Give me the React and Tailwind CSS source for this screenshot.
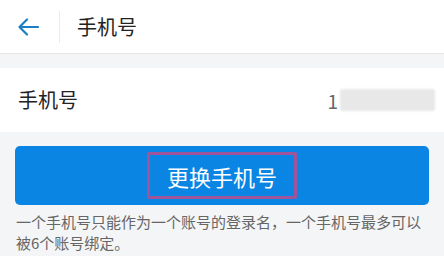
import React from "react";

export default function App() {
  return (
    <div
      className="w-[444px] h-[256px] overflow-hidden bg-[#f4f5f7]"
      style={{ fontFamily: '"Noto Sans CJK SC", "Noto Sans", sans-serif' }}
    >
      {/* header */}
      <div className="h-[54px] bg-white border-b border-[#e6e6e6] flex items-center">
        <div className="w-[59px] flex items-center pl-[18px]">
          <svg width="21" height="18" viewBox="0 0 21 18" fill="none">
            <path
              d="M20 9H2M9 1.5L1.5 9L9 16.5"
              stroke="#1b7fc4"
              strokeWidth="2.2"
              strokeLinecap="round"
              strokeLinejoin="round"
            />
          </svg>
        </div>
        <div className="w-px h-[32px] bg-[#ececec]" />
        <div className="pl-[17px] text-[20px] text-[#222] leading-none">手机号</div>
      </div>

      {/* phone row */}
      <div className="mt-[14px] h-[64px] bg-white flex items-center justify-between pl-[18px] pr-[9px]">
        <div className="text-[20px] text-[#222] leading-none">手机号</div>
        <div className="flex items-center">
          <span className="text-[19px] text-[#666] leading-none">1</span>
          <div className="ml-[2px] w-[95px] h-[22px] bg-[#e8e8e8] rounded-[2px] blur-[1px]" />
        </div>
      </div>

      {/* button */}
      <div className="px-[15px] pt-[14px]">
        <div className="h-[59px] bg-[#0a85e4] rounded-[5px] flex items-center justify-center">
          <div className="w-[150px] h-[47px] border-[3px] border-[#a0559a] rounded-[2px] flex items-center justify-center">
            <span className="text-[22px] text-white leading-none">更换手机号</span>
          </div>
        </div>
      </div>

      {/* note */}
      <div className="px-[16px] pt-[6px] text-[15px] leading-[21px] text-[#666]">
        一个手机号只能作为一个账号的登录名，一个手机号最多可以被6个账号绑定。
      </div>
    </div>
  );
}
